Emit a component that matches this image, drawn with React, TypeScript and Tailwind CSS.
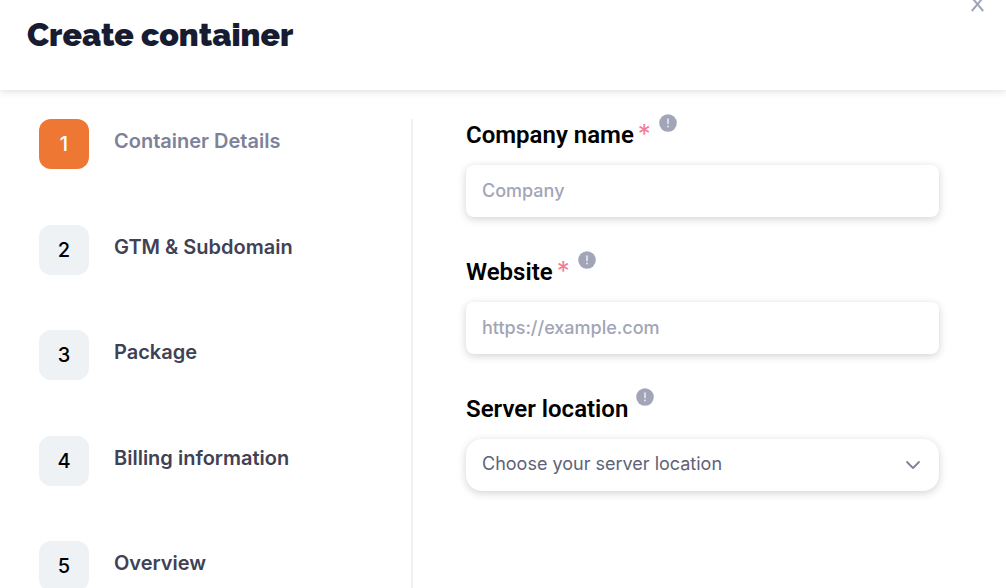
import { useState } from "react";
import type { ReactNode } from "react";
import { ChevronDown } from "lucide-react";

const STEPS = [
  "Container Details",
  "GTM & Subdomain",
  "Package",
  "Billing information",
  "Overview",
];

const LOCATIONS = ["Europe", "United States", "Asia"];

const FIELD =
  "w-full h-[52px] px-4 pb-0.5 bg-white text-lg font-['Inter',sans-serif] shadow-[0_2px_8px_rgba(0,0,0,0.18)] outline-none";

function InfoIcon() {
  return (
    <svg width="18" height="18" viewBox="0 0 18 18" aria-hidden="true">
      <circle cx="9" cy="9" r="8.8" fill="#a1a5b7" />
      <path d="M9 5v4.4" stroke="#e4e6ef" strokeWidth="1.7" strokeLinecap="round" />
      <circle cx="9" cy="12.6" r="1" fill="#e4e6ef" />
    </svg>
  );
}

function Field({
  id,
  label,
  required,
  children,
}: {
  id: string;
  label: string;
  required?: boolean;
  children: ReactNode;
}) {
  return (
    <div>
      <div className="flex items-start h-[51px]">
        <label htmlFor={id} className="pt-[5px] text-2xl font-semibold text-black font-['Roboto',sans-serif]">
          {label}
          {required && (
            <span className="pl-1 text-[26px] leading-none font-normal text-[#f1416c]/70 font-['Inter',sans-serif]">
              *
            </span>
          )}
        </label>
        <button type="button" aria-label={`About ${label}`} className="ml-2">
          <InfoIcon />
        </button>
      </div>
      {children}
    </div>
  );
}

export default function App() {
  const [active, setActive] = useState(0);
  const [location, setLocation] = useState("");

  return (
    <div className="h-screen overflow-hidden flex flex-col bg-white font-['Inter',sans-serif]">
      <header className="shrink-0 h-[90px] flex items-start justify-between pl-[27px] pr-[21px] shadow-[0_1px_8px_rgba(0,0,0,0.15)]">
        <h1 className="pt-4 text-[32px] leading-[38px] font-black text-[#181c32] font-['Raleway','Lato',sans-serif]">
          Create container
        </h1>
        <button type="button" aria-label="Close" className="-mt-1">
          <svg width="15" height="16" viewBox="0 0 15 16" fill="none" stroke="#a1a5b7" strokeWidth="2">
            <path d="M1.8 1.5 13.2 15M13.2 1.5 1.8 15" />
          </svg>
        </button>
      </header>

      <main className="flex-1 grid grid-cols-[413fr_593fr] pt-[29px]">
        {/* Steps */}
        <nav className="pl-[39px] border-r-2 border-[#eff2f5]">
          <ol className="min-h-[472px] flex flex-col justify-between">
            {STEPS.map((step, i) => (
              <li key={step}>
                <button type="button" onClick={() => setActive(i)} className="flex items-center gap-[25px]">
                  <span
                    className={`size-[50px] rounded-xl flex items-center justify-center text-xl font-medium ${
                      i === active ? "bg-[#ee7733] text-white" : "bg-[#eef2f5] text-black"
                    }`}
                  >
                    {i + 1}
                  </span>
                  <span
                    className={`pb-1.5 text-xl font-semibold ${i === active ? "text-[#7e8299]" : "text-[#3f4254]"}`}
                  >
                    {step}
                  </span>
                </button>
              </li>
            ))}
          </ol>
        </nav>

        {/* Container details */}
        <form className="flex flex-col gap-[34px] -mt-[5px] pl-[53px] pr-[67px]">
          <Field id="company" label="Company name" required>
            <input
              id="company"
              type="text"
              placeholder="Company"
              className={`${FIELD} rounded-lg font-medium placeholder:text-[#a1a5b7]`}
            />
          </Field>
          <Field id="website" label="Website" required>
            <input
              id="website"
              type="url"
              placeholder="https://example.com"
              className={`${FIELD} rounded-lg font-medium placeholder:text-[#a1a5b7]`}
            />
          </Field>
          <Field id="location" label="Server location">
            <div className="relative">
              <select
                id="location"
                value={location}
                onChange={(e) => setLocation(e.target.value)}
                className={`${FIELD} rounded-2xl appearance-none text-[#5e6278]`}
              >
                <option value="">Choose your server location</option>
                {LOCATIONS.map((name) => (
                  <option key={name}>{name}</option>
                ))}
              </select>
              <ChevronDown
                size={24}
                strokeWidth={1.8}
                className="absolute right-3.5 top-3.5 text-[#7e8299] pointer-events-none"
              />
            </div>
          </Field>
        </form>
      </main>
    </div>
  );
}
